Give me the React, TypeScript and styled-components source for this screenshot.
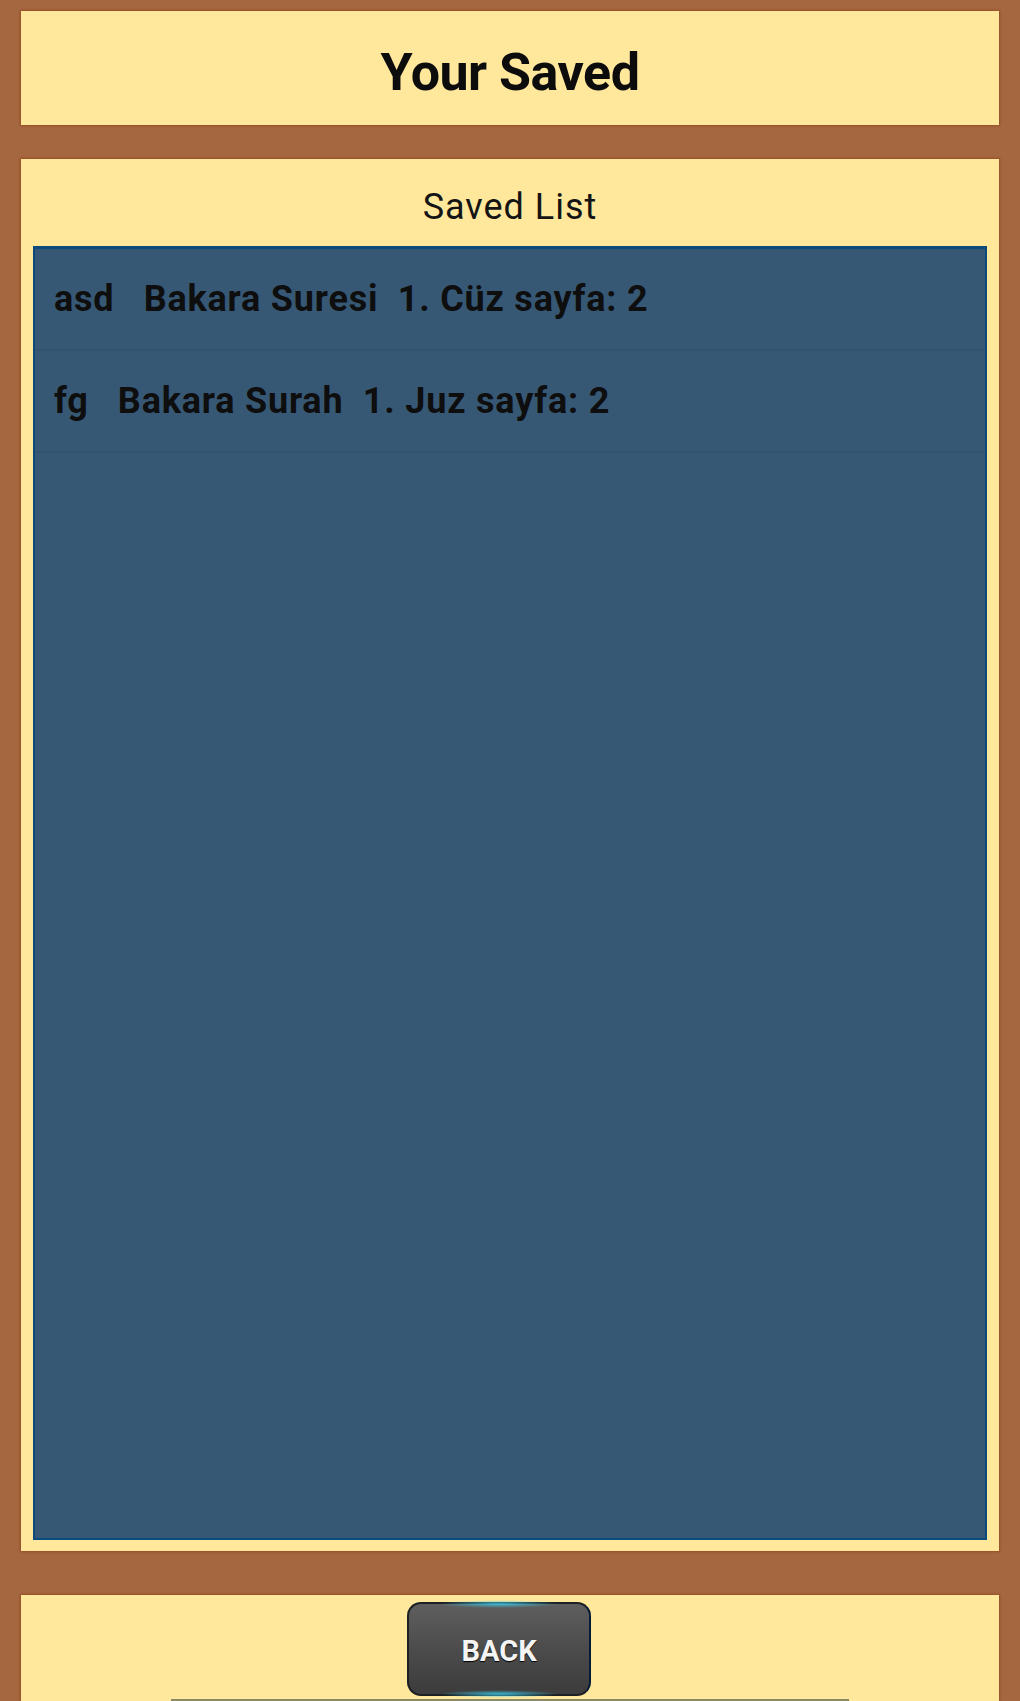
import styled, { createGlobalStyle } from "styled-components";

const GlobalStyle = createGlobalStyle`
  html, body {
    margin: 0;
    padding: 0;
    background: #a5673f;
    font-family: Roboto, "Noto Sans", "Liberation Sans", sans-serif;
  }
`;

const saved = [
  { id: 1, name: "asd", text: "asd   Bakara Suresi  1. Cüz sayfa: 2" },
  { id: 2, name: "fg", text: "fg   Bakara Surah  1. Juz sayfa: 2" },
];

export default function App() {
  return (
    <>
      <GlobalStyle />
      <Page>
        <Header>
          <Title>Your Saved</Title>
        </Header>
        <Main>
          <SubTitle>Saved List</SubTitle>
          <List>
            {saved.map((item) => (
              <Row key={item.id}>{item.text}</Row>
            ))}
          </List>
        </Main>
        <Footer>
          <BackButton>BACK</BackButton>
          <Strip />
        </Footer>
      </Page>
    </>
  );
}

const Page = styled.div`
  height: 1701px;
  overflow: hidden;
  box-sizing: border-box;
  padding: 11px 21px 0 21px;
  display: flex;
  flex-direction: column;
`;

const Panel = styled.div`
  background: #ffe79c;
  box-shadow: 0 0 2px 1px rgba(140, 60, 20, 0.55);
`;

const Header = styled(Panel)`
  height: 114px;
  display: flex;
  align-items: center;
  justify-content: center;
  padding-top: 8px;
  box-sizing: border-box;
`;

const Title = styled.div`
  font-size: 52px;
  font-weight: 700;
  color: #0c0c0c;
  letter-spacing: -0.5px;
`;

const Main = styled(Panel)`
  margin-top: 34px;
  height: 1392px;
  display: flex;
  flex-direction: column;
  padding: 0 12px 11px 12px;
  box-sizing: border-box;
`;

const SubTitle = styled.div`
  height: 87px;
  display: flex;
  align-items: center;
  justify-content: center;
  padding-top: 9px;
  box-sizing: border-box;
  font-size: 36px;
  color: #141414;
  letter-spacing: 1px;
`;

const List = styled.div`
  flex: 1;
  background: #375875;
  border: 2px solid #0b4a7c;
  border-top-width: 3px;
  display: flex;
  flex-direction: column;
`;

const Row = styled.div`
  height: 102px;
  display: flex;
  align-items: center;
  padding: 0 0 0 19px;
  box-sizing: border-box;
  border-bottom: 2px solid #32526e;
  font-size: 36px;
  font-weight: 700;
  color: #0e0e0e;
  white-space: pre;
  letter-spacing: 0.8px;
`;

const Footer = styled(Panel)`
  margin-top: 44px;
  flex: 1;
  display: flex;
  flex-direction: column;
  align-items: center;
  padding-top: 7px;
  box-sizing: border-box;
  position: relative;
`;

const BackButton = styled.button`
  position: relative;
  width: 184px;
  height: 94px;
  margin-right: 22px;
  border-radius: 14px;
  border: 2px solid #1c1f24;
  border-right-color: #061a36;
  background: linear-gradient(#5e5e5e, #4a4a4a 55%, #3c3c3c);
  color: #f4f4f4;
  font-family: Roboto, "Noto Sans", sans-serif;
  font-size: 29px;
  font-weight: 700;
  text-shadow: 0 1px 1px #000;
  padding: 4px 0 0 0;
  flex-shrink: 0;

  &::before,
  &::after {
    content: "";
    position: absolute;
    left: 30px;
    right: 30px;
    height: 8px;
    border-radius: 50%;
    background: radial-gradient(ellipse at center, rgba(60, 200, 230, 0.85), rgba(60, 200, 230, 0) 70%);
  }
  &::before {
    top: -4px;
  }
  &::after {
    bottom: -4px;
  }
`;

const Strip = styled.div`
  position: absolute;
  left: 150px;
  right: 150px;
  bottom: 0;
  height: 2px;
  background: #8c8a62;
`;
